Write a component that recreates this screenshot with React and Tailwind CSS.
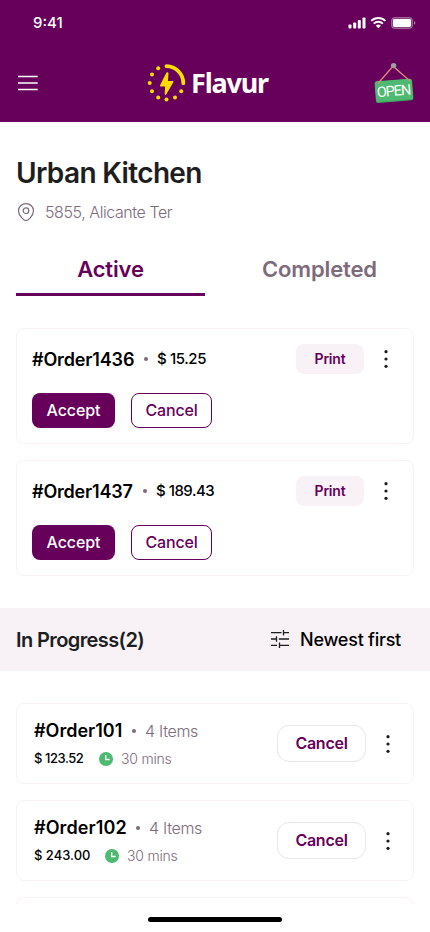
import React, { useState } from 'react';

const activeOrders = [
    { id: '#Order1436', price: '$ 15.25', idClass: 'w-[103px] tracking-[-0.15px]', priceClass: 'tracking-[-0.4px]' },
    { id: '#Order1437', price: '$ 189.43', idClass: 'w-[102px] tracking-[-0.2px]', priceClass: 'tracking-[-0.5px]' },
];

const progressOrders = [
    { id: '#Order101', items: '4 Items', price: '$ 123.52', time: '30 mins', idClass: 'w-[89px] tracking-[0px]', priceClass: 'w-[50px] tracking-[-0.45px]', gapClass: 'ml-[15px]' },
    { id: '#Order102', items: '4 Items', price: '$ 243.00', time: '30 mins', idClass: 'w-[93px] tracking-[0.1px]', priceClass: 'w-[57px] tracking-[0px]', gapClass: 'ml-[14px]' },
];

const StatusIcons = () => (
    <svg width="68" height="14" viewBox="0 0 68 14" fill="white">
        <rect x="0.5" y="8.5" width="3" height="4" rx="0.8" />
        <rect x="5.2" y="6.5" width="3" height="6" rx="0.8" />
        <rect x="9.8" y="4.1" width="3" height="8.4" rx="0.8" />
        <rect x="14.5" y="1.5" width="3" height="11" rx="0.8" />
        <g fill="none" stroke="white" strokeWidth="1.9">
            <path d="M23.2 4.9a10.2 10.2 0 0 1 14.2 0" />
            <path d="M25.7 7.6a6.6 6.6 0 0 1 9.2 0" />
        </g>
        <path d="M30.3 12.3 27.8 9.7a3.7 3.7 0 0 1 5 0Z" />
        <rect x="43.5" y="1.5" width="21" height="11" rx="3" fillOpacity="0.25" stroke="white" strokeOpacity="0.3" />
        <rect x="45" y="3" width="18" height="8" rx="1.4" />
        <path d="M66 5.2v3.6c.8-.3 1.3-1 1.3-1.8s-.5-1.5-1.3-1.8Z" fillOpacity="0.5" />
    </svg>
);

const LogoMark = () => (
    <svg width="40" height="40" viewBox="0 0 40 40" fill="#FFDD00">
        <path d="M19.5 3.2A17 17 0 0 1 36.3 20.2" fill="none" stroke="#FFDD00" strokeWidth="3.8" strokeLinecap="round" />
        <circle cx="11.2" cy="5.2" r="2" />
        <circle cx="5" cy="11.4" r="2" />
        <circle cx="2.7" cy="19.9" r="2" />
        <circle cx="5" cy="28.2" r="2" />
        <circle cx="11.2" cy="34.4" r="2" />
        <circle cx="19.5" cy="36.6" r="2" />
        <circle cx="28" cy="34.4" r="2" />
        <circle cx="34.2" cy="28.2" r="2" />
        <path d="M19.3 9.8 13.2 22c-.4.8 0 1.5.8 1.5h4.1l-.4 7.6c0 1 1 1.2 1.5.4l7-12.1c.4-.8.1-1.5-.7-1.5h-4.5l.5-7.7c0-1-1.7-1.4-2.2-.4Z" />
    </svg>
);

const OpenSign = () => (
    <svg width="42" height="42" viewBox="-1 0 42 42" className="overflow-visible">
        <g transform="rotate(-4.5 20 29)">
            <rect x="1.2" y="18.3" width="37.6" height="21.3" rx="2" fill="#3FA864" />
            <rect x="1.6" y="18" width="36.8" height="20.4" rx="1.8" fill="#4DB971" />
            <text x="2.8" y="33.8" fontSize="14.5" fontFamily="Roboto, sans-serif" fill="white" letterSpacing="-1.1">OPEN</text>
        </g>
        <path d="M3.7 21.8 19 4.2 36 19" fill="none" stroke="#D98C7C" strokeWidth="1.3" strokeLinejoin="round" />
        <circle cx="19.6" cy="3.6" r="2.7" fill="#9E9E9E" />
    </svg>
);

const PinIcon = () => (
    <svg width="18" height="20" viewBox="0 0 18 20" fill="none" stroke="#7D6B7B" strokeWidth="1.2">
        <path d="M9 1.6c4.4 0 7.5 3.2 7.5 7.2 0 2.9-1.5 5.3-3.5 7.4-1.5 1.6-2.7 2.4-4 2.4s-2.5-.8-4-2.4C3 14.1 1.5 11.7 1.5 8.8c0-4 3.1-7.2 7.5-7.2Z" />
        <circle cx="9" cy="8.7" r="2.8" />
    </svg>
);

const FilterIcon = () => (
    <svg width="18" height="18" viewBox="0 0 18 18" fill="none" stroke="#1D1B1E" strokeWidth="1.3">
        <path d="M0 2.7h10.5M12.5 0v5.4M12.5 2.7H18M0 9h5.5M5.5 6.3v5.4M7.8 9H18M0 15.3h6M8.5 12.6V18M8.5 15.3H18" />
    </svg>
);

const ClockIcon = () => (
    <svg width="14" height="14" viewBox="0 0 14 14">
        <circle cx="7" cy="7" r="7" fill="#4DB971" />
        <path d="M6.7 3v4.5h4" fill="none" stroke="white" strokeWidth="1.3" />
    </svg>
);

const MoreButton = () => (
    <button className="w-4 h-6 flex items-center justify-center">
        <svg width="4" height="18" viewBox="0 0 4 18" fill="#1D1B1E">
            <circle cx="2" cy="1.7" r="1.6" />
            <circle cx="2" cy="9" r="1.6" />
            <circle cx="2" cy="16.3" r="1.6" />
        </svg>
    </button>
);

const Dot = () => <span className="w-1 h-1 rounded-full bg-[#7D6B7B]" />;

const ActiveCard = ({ order }) => (
    <div className="h-[116px] border border-[#F8F2F6] rounded-lg px-[15px] pt-[15px]">
        <div className="h-[30px] flex items-center justify-between">
            <div className="flex items-center whitespace-nowrap">
                <span className={`text-[18px] font-semibold text-black ${order.idClass}`}>{order.id}</span>
                <span className="mx-[9px] flex"><Dot /></span>
                <span className={`text-[15px] font-medium text-black ${order.priceClass}`}>{order.price}</span>
            </div>
            <div className="flex items-center gap-3.5 pr-1">
                <button className="w-[68px] h-[30px] rounded-lg bg-[#F8F2F6] text-[#66005B] text-sm font-semibold tracking-[-0.2px]">Print</button>
                <MoreButton />
            </div>
        </div>
        <div className="flex gap-4 mt-[19px]">
            <button className="w-[83px] h-[35px] pb-0.5 rounded-lg bg-[#66005B] text-white text-base font-medium tracking-[-0.1px]">Accept</button>
            <button className="w-[81px] h-[35px] pb-0.5 rounded-lg border border-[#66005B] text-[#66005B] text-base font-medium tracking-[-0.15px]">Cancel</button>
        </div>
    </div>
);

const ProgressCard = ({ order }) => (
    <div className="h-[81px] shrink-0 border border-[#F8F2F6] rounded-lg px-[17px] flex items-center justify-between">
        <div className="pt-0.5 whitespace-nowrap">
            <div className="h-7 flex items-center">
                <span className={`text-[18px] font-semibold text-black ${order.idClass}`}>{order.id}</span>
                <span className="mx-[9px] flex"><Dot /></span>
                <span className="text-base font-light text-[#7D6B7B] tracking-[-0.3px]">{order.items}</span>
            </div>
            <div className="h-7 flex items-center">
                <span className={`text-[13px] font-medium text-black ${order.priceClass}`}>{order.price}</span>
                <span className={order.gapClass}><ClockIcon /></span>
                <span className="ml-2 text-sm font-light text-[#7D6B7B] tracking-[-0.2px]">{order.time}</span>
            </div>
        </div>
        <div className="flex items-center gap-3.5">
            <button className="w-[89px] h-[37px] pb-0.5 rounded-xl border border-[#E8E6E8] text-[#66005B] text-base font-semibold tracking-[-0.25px]">Cancel</button>
            <MoreButton />
        </div>
    </div>
);

const App = () => {
    const [tab, setTab] = useState('Active');

    return (
        <div className="w-[430px] h-[932px] bg-white overflow-hidden font-['Inter',sans-serif] flex flex-col">
            <header className="h-[122px] shrink-0 bg-[#66005B] text-white">
                <div className="h-[45px] flex items-center justify-between pl-[33px] pr-[14px]">
                    <span className="pt-0.5 text-[15px] font-medium">9:41</span>
                    <StatusIcons />
                </div>
                <div className="h-[75px] flex items-center justify-between pl-[18px] pr-[15px]">
                    <button>
                        <svg width="20" height="16" viewBox="0 0 20 16" stroke="white" strokeWidth="1.3">
                            <path d="M0 1.5h19.7M0 8h19.7M0 14.5h19.7" />
                        </svg>
                    </button>
                    <div className="flex items-center ml-1">
                        <LogoMark />
                        <span className="ml-1 text-[27px] leading-[38px] font-bold font-['Noto_Sans',sans-serif] tracking-[-1.2px]">Flavur</span>
                    </div>
                    <OpenSign />
                </div>
            </header>

            <section className="px-4 shrink-0">
                <h1 className="h-10 mt-[31px] text-[28px] leading-10 font-semibold text-[#201D20] tracking-[-0.65px]">Urban Kitchen</h1>
                <div className="h-5 mt-[9px] flex items-center text-base font-light text-[#7D6B7B] whitespace-nowrap">
                    <span className="ml-[1px] mr-[10px]"><PinIcon /></span>
                    <span className="tracking-[-0.42px]">5855, Alicante Ter</span>
                </div>
                <div className="mt-[22px] grid grid-cols-2 gap-5">
                    {['Active', 'Completed'].map((name) => (
                        <button
                            key={name}
                            onClick={() => setTab(name)}
                            className={`h-[52px] pt-0.5 border-b-3 text-[22px] font-semibold tracking-[-0.15px] ${tab === name ? 'border-[#66005B] text-[#66005B]' : 'border-transparent text-[#7D6B7B]'}`}
                        >
                            {name}
                        </button>
                    ))}
                </div>
                <div className="mt-8 flex flex-col gap-4">
                    {activeOrders.map((order) => (
                        <ActiveCard key={order.id} order={order} />
                    ))}
                </div>
            </section>

            <div className="mt-8 h-[63px] shrink-0 bg-[#F8F2F6] pl-4 pr-[29px] flex items-center justify-between">
                <h2 className="text-[20px] font-semibold text-[#201D20] tracking-[-0.6px]">In Progress(2)</h2>
                <div className="flex items-center gap-[11px]">
                    <span className="pb-0.5"><FilterIcon /></span>
                    <span className="text-[18px] font-medium text-black tracking-[-0.25px]">Newest first</span>
                </div>
            </div>

            <section className="mt-8 h-[201px] shrink-0 px-4 flex flex-col gap-4 overflow-hidden">
                {progressOrders.map((order) => (
                    <ProgressCard key={order.id} order={order} />
                ))}
                <div className="h-[81px] shrink-0 border border-[#F8F2F6] rounded-lg" />
            </section>

            <div className="mt-[13px] mx-auto w-[134px] h-[5px] shrink-0 rounded-full bg-black" />
        </div>
    );
};

export default App;
